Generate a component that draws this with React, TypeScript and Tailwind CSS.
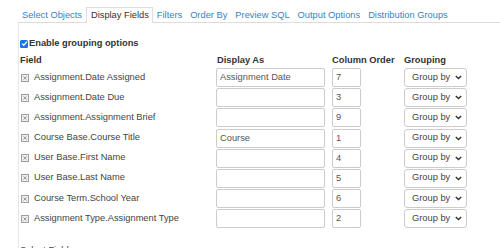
import React from 'react';

interface FieldRow {
  field: string;
  displayAs: string;
  order: string;
}

const tabs = [
  'Select Objects',
  'Display Fields',
  'Filters',
  'Order By',
  'Preview SQL',
  'Output Options',
  'Distribution Groups',
];

const rows: FieldRow[] = [
  { field: 'Assignment.Date Assigned', displayAs: 'Assignment Date', order: '7' },
  { field: 'Assignment.Date Due', displayAs: '', order: '3' },
  { field: 'Assignment.Assignment Brief', displayAs: '', order: '9' },
  { field: 'Course Base.Course Title', displayAs: 'Course', order: '1' },
  { field: 'User Base.First Name', displayAs: '', order: '4' },
  { field: 'User Base.Last Name', displayAs: '', order: '5' },
  { field: 'Course Term.School Year', displayAs: '', order: '6' },
  { field: 'Assignment Type.Assignment Type', displayAs: '', order: '2' },
];

const RemoveIcon = () => (
  <svg width="8" height="8" viewBox="0 0 8 8" className="shrink-0">
    <rect x="0.5" y="0.5" width="7" height="7" fill="#eeeeee" stroke="#a0a0a0" />
    <path d="M2.5 2.5 L5.5 5.5 M5.5 2.5 L2.5 5.5" stroke="#909090" strokeWidth="0.9" />
  </svg>
);

const Chevron = () => (
  <svg width="7" height="5" viewBox="0 0 7 5">
    <path d="M0.8 0.9 L3.5 3.6 L6.2 0.9" fill="none" stroke="#333" strokeWidth="1.4" />
  </svg>
);

export default function App() {
  return (
    <div className="w-[500px] h-[248px] overflow-hidden bg-white text-[9.3px] text-[#444] font-['Liberation_Sans',Arial,sans-serif]">
      <div className="pl-[18px] pt-[7px]">
        {/* Tabs */}
        <div className="flex h-[16px] border-b border-[#dddddd]">
          {tabs.map((t) => {
            const active = t === 'Display Fields';
            return (
              <div
                key={t}
                className={
                  active
                    ? 'h-[16px] pl-[4px] pr-[3px] leading-[14px] border border-b-0 border-[#dddddd] bg-white text-[#333] whitespace-nowrap'
                    : 'h-[15px] px-[3px] leading-[14px] border border-transparent border-b-0 text-[#3a7fc1] whitespace-nowrap'
                }
              >
                {t}
              </div>
            );
          })}
        </div>

        {/* Content */}
        <div className="border-l border-[#e6e6e6] pl-[1px] pt-[16px] h-[240px]">
          <div className="flex items-center h-[9px]">
            <span className="w-[8px] h-[8px] rounded-[1.5px] bg-[#1a73e8] flex items-center justify-center">
              <svg width="7" height="7" viewBox="0 0 7 7">
                <path d="M1 3.6 L2.8 5.3 L6 1.6" fill="none" stroke="#fff" strokeWidth="1.3" />
              </svg>
            </span>
            <span className="ml-[1px] font-bold text-[#333]">Enable grouping options</span>
          </div>

          <div className="grid grid-cols-[196px_116px_72px_auto] mt-[5px]">
            <div className="h-[14px] leading-[14px] font-bold text-[#333]">Field</div>
            <div className="h-[14px] leading-[14px] font-bold text-[#333] pl-[1px]">Display As</div>
            <div className="h-[14px] leading-[14px] font-bold text-[#333]">Column Order</div>
            <div className="h-[14px] leading-[14px] font-bold text-[#333]">Grouping</div>
          </div>

          <div className="mt-[1px] flex flex-col">
            {rows.map((r) => (
              <div key={r.field} className="grid grid-cols-[196px_116px_72px_auto] h-[20.2px] items-start">
                <div className="flex items-center gap-[5px] h-[19px] pl-[1px]">
                  <RemoveIcon />
                  <span className="whitespace-nowrap">{r.field}</span>
                </div>
                <div className="w-[109px] h-[19px] border border-[#cccccc] rounded-[2px] px-[3px] leading-[17px] text-[#555]">
                  {r.displayAs}
                </div>
                <div className="w-[29px] h-[19px] border border-[#cccccc] rounded-[2px] px-[3px] leading-[17px] text-[#555]">
                  {r.order}
                </div>
                <div className="w-[63px] h-[19px] border border-[#cccccc] rounded-[3px] pl-[7px] pr-[4px] flex items-center justify-between text-[#444]">
                  <span>Group by</span>
                  <Chevron />
                </div>
              </div>
            ))}
          </div>

          <div className="mt-[14px] text-[#444]">Select Fields</div>
        </div>
      </div>
    </div>
  );
}
